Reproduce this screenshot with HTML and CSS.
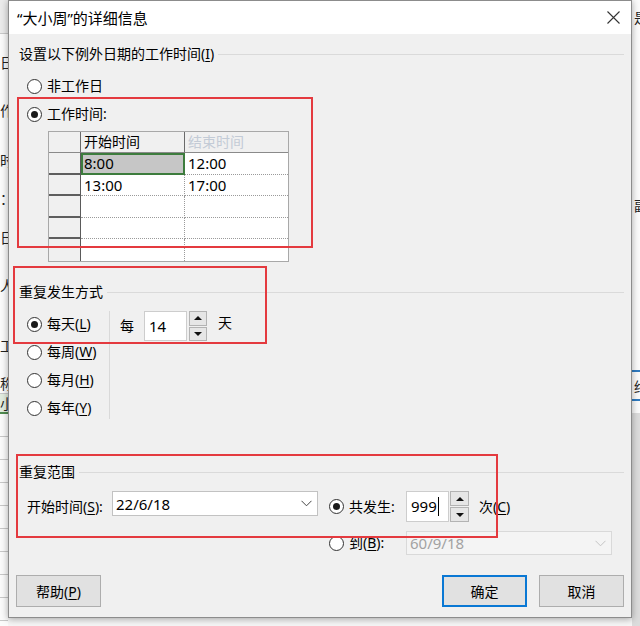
FILE: index.html
```html
<!DOCTYPE html>
<html lang="zh-CN">
<head>
<meta charset="utf-8">
<title>“大小周”的详细信息</title>
<link rel="stylesheet" href="styles.css">
</head>
<body>
<div class="screen">
  <div class="strip left">
    <div class="cell head"></div>
    <div class="cell"></div>
    <div class="cell">日</div>
    <div class="cell">作</div>
    <div class="cell">时</div>
    <div class="cell">：</div>
    <div class="cell">日</div>
    <div class="cell">人</div>
    <div class="cell"></div>
    <div class="cell">工</div>
    <div class="cell"></div>
    <div class="cell lined">称</div>
    <div class="cell green">小</div>
    <div class="cell lined"></div>
    <div class="cell lined"></div>
    <div class="cell lined"></div>
    <div class="cell lined"></div>
    <div class="cell lined"></div>
    <div class="cell lined"></div>
    <div class="cell lined"></div>
    <div class="cell lined"></div>
    <div class="cell lined"></div>
  </div>

  <div class="dialog">
    <div class="titlebar">
      <span class="title">“大小周”的详细信息</span>
      <svg class="close" width="13" height="13" viewBox="0 0 13 13"><path d="M0.5 0.5 L12.5 12.5 M12.5 0.5 L0.5 12.5" stroke="#333" stroke-width="1.1" fill="none"/></svg>
    </div>

    <div class="content">
      <div class="group-head first"><span>设置以下例外日期的工作时间(<u>I</u>)</span><i class="rule"></i></div>

      <div class="radio r1"><span class="circle"></span><span>非工作日</span></div>
      <div class="radio on r2"><span class="circle"></span><span>工作时间:</span></div>

      <div class="grid-table">
        <div class="th corner"></div>
        <div class="th">开始时间</div>
        <div class="th last muted">结束时间</div>

        <div class="rh"></div>
        <div class="td sel">8:00</div>
        <div class="td last">12:00</div>

        <div class="rh"></div>
        <div class="td">13:00</div>
        <div class="td last">17:00</div>

        <div class="rh"></div>
        <div class="td"></div>
        <div class="td last"></div>

        <div class="rh"></div>
        <div class="td"></div>
        <div class="td last"></div>

        <div class="rh bottom"></div>
        <div class="td bottom"></div>
        <div class="td last bottom"></div>
      </div>

      <div class="group-head second"><span>重复发生方式</span><i class="rule"></i></div>

      <div class="repeat">
        <div class="opts">
          <div class="radio on"><span class="circle"></span><span>每天(<u>L</u>)</span></div>
          <div class="radio"><span class="circle"></span><span>每周(<u>W</u>)</span></div>
          <div class="radio"><span class="circle"></span><span>每月(<u>H</u>)</span></div>
          <div class="radio"><span class="circle"></span><span>每年(<u>Y</u>)</span></div>
        </div>
        <div class="every">
          <span class="lbl">每</span>
          <div class="spin">
            <div class="field">14</div>
            <div class="btns">
              <div class="sbtn"><i class="tri up"></i></div>
              <div class="sbtn"><i class="tri down"></i></div>
            </div>
          </div>
          <span class="lbl unit">天</span>
        </div>
      </div>

      <div class="group-head third"><span>重复范围</span><i class="rule"></i></div>

      <div class="range">
        <div class="rlabel">开始时间(<u>S</u>):</div>
        <div class="combo"><span>22/6/18</span><svg width="11" height="7" viewBox="0 0 11 7"><path d="M0.5 0.8 L5.5 5.8 L10.5 0.8" stroke="#444" stroke-width="1" fill="none"/></svg></div>
        <div class="radio on rr"><span class="circle"></span><span>共发生:</span></div>
        <div class="count">
          <div class="spin tall">
            <div class="field">999<i class="caret"></i></div>
            <div class="btns">
              <div class="sbtn"><i class="tri up"></i></div>
              <div class="sbtn"><i class="tri down"></i></div>
            </div>
          </div>
          <span class="times">次(<u>C</u>)</span>
        </div>

        <div></div>
        <div></div>
        <div class="radio rr"><span class="circle"></span><span>到(<u>B</u>):</span></div>
        <div class="combo disabled"><span>60/9/18</span><svg width="11" height="7" viewBox="0 0 11 7"><path d="M0.5 0.8 L5.5 5.8 L10.5 0.8" stroke="#c4c4c4" stroke-width="1" fill="none"/></svg></div>
      </div>

      <div class="buttons">
        <div class="btn">帮助(<u>P</u>)</div>
        <div class="right">
          <div class="btn default">确定</div>
          <div class="btn">取消</div>
        </div>
      </div>
    </div>

    <div class="mark m1"></div>
    <div class="mark m2"></div>
    <div class="mark m3"></div>
  </div>

  <div class="strip right">
    <div class="rcell top">是</div>
    <div class="rcell gap1"></div>
    <div class="rcell mid">副</div>
    <div class="rcell gap2"></div>
    <div class="rcell blue">终</div>
    <div class="rcell gap3"></div>
    <div class="rcell gray"></div>
  </div>
</div>
</body>
</html>
```

FILE: styles.css
```css
html, body {
  margin: 0;
  padding: 0;
}

body {
  background: #f6f6f6;
  font-family: "Noto Sans", "Noto Sans CJK SC", sans-serif;
  font-size: 14px;
  color: #000;
}

u {
  text-decoration: underline;
  text-underline-offset: 2px;
  text-decoration-thickness: 1px;
}

.screen {
  display: flex;
  width: 640px;
  height: 626px;
  overflow: hidden;
}

/* ---------- background application strips ---------- */
.strip {
  width: 8px;
  flex: none;
  overflow: hidden;
  background: #fbfbfb;
}

.strip.left {
  display: grid;
  grid-template-rows: 34px 4px 48px 48px 52px 24px 54px 42px 18px 42px 6px 22px 20px repeat(9, 23px);
}

.strip.left .cell {
  display: flex;
  justify-content: flex-end;
  align-items: center;
  white-space: nowrap;
  font-size: 14px;
  color: #222;
  margin-right: -1px;
}

.strip.left .cell.head {
  background: #ebebeb;
  border-bottom: 1px solid #c9c9c9;
}

.strip.left .cell.lined {
  border-bottom: 1px solid #c8c8c8;
}

.strip.left .cell.green {
  background: #e2ecdf;
  border-bottom: 2px solid #4f8a4f;
}

.strip.right {
  display: flex;
  flex-direction: column;
}

.rcell {
  white-space: nowrap;
  font-size: 14px;
  color: #222;
  padding-left: 2px;
  display: flex;
  align-items: center;
}

.rcell.top { height: 34px; }
.rcell.gap1 { height: 161px; }
.rcell.mid { height: 20px; }
.rcell.gap2 { height: 155px; }
.rcell.blue {
  height: 31px;
  border-top: 2px solid #2f7bc0;
  border-bottom: 2px solid #2f7bc0;
  box-sizing: border-box;
}
.rcell.gap3 { height: 12px; }
.rcell.gray { flex: 1; background: #dcdcdc; }

/* ---------- dialog ---------- */
.dialog {
  position: relative;
  z-index: 1;
  flex: none;
  width: 624px;
  height: 618px;
  box-sizing: border-box;
  border: 1px solid #8c8c8c;
  background: #f0f0f0;
  box-shadow: 0 1px 7px rgba(0, 0, 0, 0.35);
  display: flex;
  flex-direction: column;
}

.titlebar {
  height: 33px;
  flex: none;
  background: #fff;
  display: flex;
  align-items: center;
  justify-content: space-between;
  padding: 0 11px 0 8px;
}

.title {
  font-size: 15px;
  line-height: 20px;
}

.close {
  display: block;
}

.content {
  flex: 1;
  display: flex;
  flex-direction: column;
  padding: 0 7px 0 7px;
}

.group-head {
  display: flex;
  align-items: center;
  height: 20px;
  line-height: 20px;
  gap: 4px;
  padding-left: 3px;
  white-space: nowrap;
}

.group-head .rule {
  flex: 1;
  height: 1px;
  background: #dadada;
}

.group-head.first { margin-top: 10px; }
.group-head.second { margin-top: 20px; }
.group-head.third { margin-top: 43px; }

/* radios */
.radio {
  display: flex;
  align-items: center;
  height: 20px;
  gap: 5px;
  padding-left: 11px;
  white-space: nowrap;
  line-height: 20px;
}

.radio .circle {
  width: 15px;
  height: 15px;
  box-sizing: border-box;
  border: 1px solid #333;
  border-radius: 50%;
  background: #fff;
  display: flex;
  align-items: center;
  justify-content: center;
  flex: none;
}

.radio.on .circle::after {
  content: "";
  width: 7px;
  height: 7px;
  border-radius: 50%;
  background: #1a1a1a;
}

.radio.r1 { margin-top: 12px; }
.radio.r2 { margin-top: 8px; }

/* working-time table */
.grid-table {
  margin: 7px 0 0 32px;
  display: grid;
  grid-template-columns: 32px 104px 103px;
  grid-template-rows: 21px 22px 21px 22px 21px 22px;
  width: max-content;
  border: 1px solid #a8a8a8;
  background: #fff;
}

.grid-table > div {
  box-sizing: border-box;
  font-size: 15px;
  line-height: 20px;
  padding-left: 3px;
  white-space: nowrap;
}

.th {
  background: #f0f0f0;
  border-right: 1px solid #6a6a6a;
  border-bottom: 1px solid #8a8a8a;
  font-size: 14px !important;
}

.th.last { border-right: none; }
.th.muted { color: #c3cbd6; }

.rh {
  background: #f0f0f0;
  border-right: 1px solid #5a5a5a;
  border-bottom: 2px solid #5e5e5e;
}

.rh.bottom { border-bottom: none; }

.td {
  border-right: 1px dotted #9a9a9a;
  border-bottom: 1px dotted #9a9a9a;
}

.td.last { border-right: none; }
.td.bottom { border-bottom: none; }

.td.sel {
  background: #c6c6c6;
  box-shadow: inset 0 0 0 2px #3d7c3d;
  border-right: none;
  border-bottom: none;
}

/* repeat pattern */
.repeat {
  display: flex;
  margin-top: 9px;
  height: 108px;
}

.repeat .opts {
  width: 93px;
  display: flex;
  flex-direction: column;
  gap: 8px;
  padding-top: 3px;
  border-right: 1px solid #d9d9d9;
}

.every {
  display: flex;
  align-items: flex-start;
  margin-left: 10px;
}

.every .lbl {
  line-height: 30px;
}

.every .lbl.unit {
  line-height: 24px;
  margin-left: 11px;
}

.spin {
  display: flex;
  gap: 2px;
  margin-left: 10px;
}

.spin .field {
  width: 43px;
  height: 30px;
  box-sizing: border-box;
  border: 1px solid #cdcdcd;
  background: #fff;
  font-size: 15px;
  line-height: 27px;
  padding-left: 4px;
  display: flex;
  align-items: center;
}

.spin .btns {
  width: 18px;
  height: 30px;
  display: grid;
  grid-template-rows: 1fr 1fr;
  gap: 1px;
}

.sbtn {
  box-sizing: border-box;
  background: #e6e6e6;
  border: 1px solid #b3b3b3;
  display: flex;
  align-items: center;
  justify-content: center;
}

.tri {
  width: 0;
  height: 0;
  border-left: 4px solid transparent;
  border-right: 4px solid transparent;
}

.tri.up { border-bottom: 4px solid #111; }
.tri.down { border-top: 4px solid #111; }

/* range */
.range {
  display: grid;
  grid-template-columns: 96px 206px 88px 1fr;
  grid-template-rows: 31px 24px;
  row-gap: 9px;
  margin-top: 9px;
}

.rlabel {
  padding-left: 11px;
  align-self: center;
  line-height: 20px;
  white-space: nowrap;
}

.combo {
  box-sizing: border-box;
  height: 25px;
  border: 1px solid #c2c2c2;
  background: #fff;
  display: flex;
  align-items: center;
  justify-content: space-between;
  padding: 0 5px 0 3px;
  font-size: 15px;
}

.combo.disabled {
  width: 206px;
  height: 24px;
  background: #f4f4f4;
  border-color: #d9d9d9;
  color: #a2a2a2;
}

.radio.rr {
  align-self: center;
  padding-left: 11px;
}

.count {
  display: flex;
  align-items: flex-start;
}

.spin.tall {
  margin-left: 0;
  gap: 1px;
}

.spin.tall .field {
  height: 31px;
  width: 43px;
}

.spin.tall .btns {
  width: 19px;
  height: 31px;
}

.caret {
  display: inline-block;
  width: 1px;
  height: 19px;
  background: #000;
  margin-left: 1px;
}

.times {
  margin-left: 10px;
  line-height: 31px;
  white-space: nowrap;
}

/* buttons */
.buttons {
  display: flex;
  margin-top: 20px;
}

.buttons .right {
  margin-left: auto;
  display: flex;
  gap: 12px;
}

.btn {
  width: 85px;
  height: 32px;
  box-sizing: border-box;
  border: 1px solid #adadad;
  background: #e1e1e1;
  display: flex;
  align-items: center;
  justify-content: center;
  white-space: nowrap;
}

.btn.default {
  border: 2px solid #0a78d4;
}

/* red annotation boxes */
.mark {
  position: absolute;
  box-sizing: border-box;
  border: 2px solid #e43a3f;
  pointer-events: none;
}

.mark.m1 { left: 8px; top: 96px; width: 296px; height: 151px; }
.mark.m2 { left: 4px; top: 265px; width: 254px; height: 78px; }
.mark.m3 { left: 7px; top: 453px; width: 482px; height: 84px; }
```
